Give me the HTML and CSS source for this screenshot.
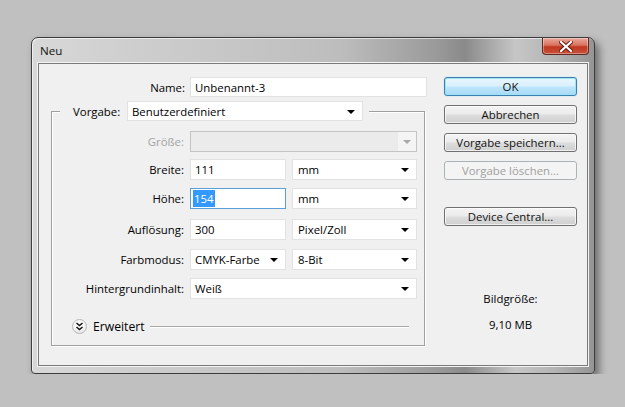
FILE: index.html
```html
<!DOCTYPE html>
<html lang="de">
<head>
<meta charset="utf-8">
<title>Neu</title>
<link rel="stylesheet" href="styles.css">
</head>
<body>
<div class="desktop">
  <div class="window">
    <div class="titlebar">
      <span class="title">Neu</span>
      <div class="close">
        <svg width="14" height="11" viewBox="0 0 14 11"><path d="M2 1 L12 10 M12 1 L2 10" stroke="#5a1a10" stroke-width="4" stroke-linecap="square"/><path d="M2 1 L12 10 M12 1 L2 10" stroke="#fff" stroke-width="2.2" stroke-linecap="square"/></svg>
      </div>
    </div>
    <div class="client">
      <div class="left">
        <div class="name-row">
          <span class="lbl lbl-name">Name:</span>
          <div class="field w-name">Unbenannt-3</div>
        </div>
        <fieldset class="group">
          <legend class="legend">
            <span class="lbl-legend">Vorgabe:</span>
            <div class="combo w-preset">Benutzerdefiniert<span class="arrow"></span></div>
          </legend>
          <div class="row">
            <span class="lbl disabled">Größe:</span>
            <div class="combo combo-disabled w-full"><span class="arrow-area"><span class="arrow arrow-gray"></span></span></div>
          </div>
          <div class="row">
            <span class="lbl">Breite:</span>
            <div class="field w-small">111</div>
            <div class="combo w-unit">mm<span class="arrow"></span></div>
          </div>
          <div class="row row-3">
            <span class="lbl">Höhe:</span>
            <div class="field w-small focus"><span class="sel">154</span></div>
            <div class="combo w-unit">mm<span class="arrow"></span></div>
          </div>
          <div class="row row-4">
            <span class="lbl">Auflösung:</span>
            <div class="field w-small">300</div>
            <div class="combo w-unit">Pixel/Zoll<span class="arrow"></span></div>
          </div>
          <div class="row row-5">
            <span class="lbl">Farbmodus:</span>
            <div class="combo w-small">CMYK-Farbe<span class="arrow"></span></div>
            <div class="combo w-unit">8-Bit<span class="arrow"></span></div>
          </div>
          <div class="row row-6">
            <span class="lbl">Hintergrundinhalt:</span>
            <div class="combo w-full">Weiß<span class="arrow"></span></div>
          </div>
          <div class="adv-row">
            <span class="adv-icon">
              <svg width="9" height="9" viewBox="0 0 9 9"><path d="M1.5 1 L4.5 3.5 L7.5 1 M1.5 5 L4.5 7.5 L7.5 5" fill="none" stroke="#111" stroke-width="1.5"/></svg>
            </span>
            <span class="adv-text">Erweitert</span>
            <span class="adv-line"></span>
          </div>
        </fieldset>
      </div>
      <div class="right">
        <div class="btn btn-default">OK</div>
        <div class="btn">Abbrechen</div>
        <div class="btn">Vorgabe speichern...</div>
        <div class="btn btn-disabled">Vorgabe löschen...</div>
        <div class="btn btn-device">Device Central...</div>
        <div class="info-label">Bildgröße:</div>
        <div class="info-value">9,10 MB</div>
      </div>
    </div>
  </div>
</div>
</body>
</html>
```
FILE: styles.css
```css
html, body {
  margin: 0;
  padding: 0;
}
body {
  background: #c0c0c0;
  font-family: "Open Sans", "Noto Sans", sans-serif;
  font-size: 11.4px;
  color: #000;
}
.desktop {
  padding: 37px 0 0 31px;
}
.window {
  width: 564px;
  height: 337px;
  box-sizing: border-box;
  border: 1px solid #3c3c3c;
  border-radius: 7px 7px 4px 4px;
  padding: 0 6px 7px 6px;
  background:
    linear-gradient(to right, #d8d8d8 0%, #cdcdcd 20%, #bdbdbd 55%, #9a9a9a 72%, #8a8a8a 77%, #c6c6c6 86%, #b4b4b4 93%, #959595 100%);
  box-shadow: 4px 5px 9px rgba(0,0,0,0.45), inset 1px 1px 0 rgba(255,255,255,0.6);
}
.titlebar {
  height: 25px;
  display: flex;
  align-items: center;
  justify-content: space-between;
}
.title {
  padding-left: 2px;
  color: #111;
  font-size: 11.6px;
}
.close {
  align-self: flex-start;
  width: 47px;
  height: 17px;
  margin-right: -1px;
  box-sizing: border-box;
  border: 1px solid #5e2a22;
  border-top: none;
  border-radius: 0 0 4px 4px;
  background: linear-gradient(to bottom, #e9a899 0%, #d9735f 45%, #c0391f 55%, #c8503a 100%);
  box-shadow: inset 0 0 0 1px rgba(255,255,255,0.35);
  display: flex;
  align-items: center;
  justify-content: center;
}
.client {
  width: 550px;
  height: 303px;
  box-sizing: border-box;
  border: 1px solid #7a7a7a;
  box-shadow: 0 0 0 1px #f4f4f4;
  background: #f0f0f0;
  display: grid;
  grid-template-columns: 405px 133px;
}
.left {
  padding-top: 13px;
}
.name-row {
  display: flex;
  align-items: center;
  gap: 5px;
}
.lbl {
  text-align: right;
  white-space: nowrap;
}
.lbl-name {
  width: 146px;
}
.field, .combo {
  position: relative;
  box-sizing: border-box;
  height: 21px;
  line-height: 19px;
  background: #fff;
  border: 1px solid #e2e2e2;
  padding: 0 4px;
  white-space: nowrap;
}
.w-name {
  width: 237px;
  height: 20px;
}
.w-preset {
  width: 236px;
  height: 20px;
  text-align: left;
}
.w-full {
  width: 227px;
}
.w-small {
  width: 96px;
}
.w-unit {
  width: 125px;
  padding-left: 5px;
}
.arrow {
  position: absolute;
  right: 7px;
  top: 8px;
  width: 0;
  height: 0;
  border-left: 4px solid transparent;
  border-right: 4px solid transparent;
  border-top: 4px solid #000;
}
.arrow-gray {
  border-top-color: #a8a8a8;
  right: 5px;
}
.combo-disabled {
  background: #ebebeb;
  border-color: #c4c4c4;
}
.arrow-area {
  position: absolute;
  right: 0;
  top: 0;
  bottom: 0;
  width: 18px;
  background: #f4f4f4;
}
.focus {
  border-color: #5b9fd8;
  padding-left: 2px;
}
.sel {
  background: #3399ff;
  color: #fff;
  padding: 1px 1px;
}
.group {
  margin: 4px 0 0 12px;
  width: 374px;
  height: 245px;
  box-sizing: border-box;
  padding: 10px 0 0 0;
  border: 1px solid #a0a0a0;
  box-shadow: 1px 1px 0 #fff, inset 1px 1px 0 #fff;
  display: flex;
  flex-direction: column;
  gap: 7px;
}
.legend {
  margin-left: 8px;
  padding: 0 6px 0 13px;
  display: flex;
  align-items: center;
  gap: 4px;
  background: #f0f0f0;
}
.lbl-legend {
  width: 50px;
  white-space: nowrap;
}
.row {
  display: flex;
  align-items: center;
  gap: 6px;
}
.row-3 { margin-top: 1px; }
.row-4 { margin-top: 3px; }
.row-5 { margin-top: 2px; }
.row-6 { margin-top: 1px; }
.row .lbl {
  width: 132px;
}
.disabled {
  color: #a3a3a3;
}
.adv-row {
  display: flex;
  align-items: center;
  margin-top: 12px;
  padding-left: 20px;
  padding-right: 15px;
  height: 16px;
}
.adv-icon {
  width: 15px;
  height: 15px;
  box-sizing: border-box;
  border-radius: 50%;
  border: 1px solid #b8b8b8;
  background: radial-gradient(circle at 50% 35%, #ffffff 0%, #f2f2f2 55%, #d8d8d8 100%);
  display: flex;
  align-items: center;
  justify-content: center;
}
.adv-text {
  margin-left: 6px;
  font-size: 12.2px;
}
.adv-line {
  flex: 1;
  margin-left: 5px;
  height: 1px;
  background: #a8a8a8;
  box-shadow: 0 1px 0 #fff;
}
.right {
  padding-top: 13px;
  display: flex;
  flex-direction: column;
}
.btn {
  box-sizing: border-box;
  height: 19px;
  line-height: 17px;
  text-align: center;
  border: 1px solid #707070;
  border-radius: 3px;
  background: linear-gradient(to bottom, #f4f4f4 0%, #ebebeb 48%, #dddddd 52%, #cfcfcf 100%);
  box-shadow: inset 0 0 0 1px rgba(255,255,255,0.7);
  margin-bottom: 9px;
  color: #111;
}
.btn-default {
  border-color: #3c7fb1;
  background: linear-gradient(to bottom, #eaf6fd 0%, #d9f0fc 48%, #bee6fd 52%, #a7d9f5 100%);
  box-shadow: inset 0 0 0 1px #9fe2f8, 0 0 1px #5bc7ef;
}
.btn-disabled {
  border-color: #adb2b5;
  background: #f4f4f4;
  color: #a0a0a0;
  box-shadow: none;
}
.btn-device {
  margin-top: 18px;
}
.info-label {
  margin-top: 55px;
  text-align: center;
  line-height: 17px;
}
.info-value {
  margin-top: 9px;
  text-align: center;
  line-height: 17px;
}
```
